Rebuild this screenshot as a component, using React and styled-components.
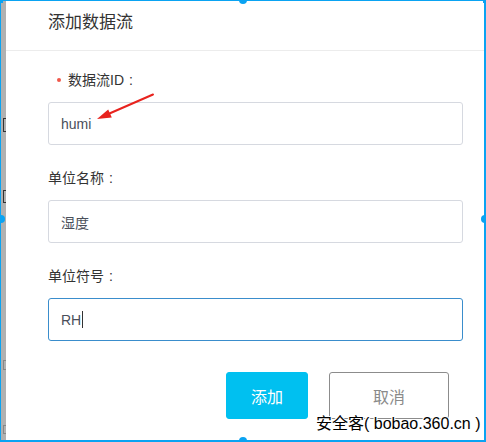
import React from "react";
import styled, { createGlobalStyle } from "styled-components";

const Global = createGlobalStyle`
  html, body { margin: 0; padding: 0; background: #fff; }
  body { font-family: "Liberation Sans", "Noto Sans CJK SC", sans-serif; }
`;

const BLUE = "#0aa3f2";

const Stage = styled.div`
  position: relative;
  width: 486px;
  height: 442px;
  overflow: hidden;
`;

const Frame = styled.div`
  box-sizing: border-box;
  width: 486px;
  height: 442px;
  border-top: 1px solid ${BLUE};
  border-left: 1px solid ${BLUE};
  border-right: 2px solid ${BLUE};
  border-bottom: 2px solid ${BLUE};
  display: flex;
`;

const BackStrip = styled.div`
  width: 5px;
  flex-shrink: 0;
  background: #b1b1b1;
  overflow: hidden;
  display: flex;
  flex-direction: column;
  align-items: flex-end;
`;

/* bits of the dimmed page behind the dialog */
const StripMark = styled.span`
  display: block;
  margin-top: ${(p) => p.top}px;
  width: ${(p) => p.w || 3}px;
  height: ${(p) => p.h}px;
  border-left: 1px solid ${(p) => p.color || "#333"};
  border-top: 1px solid ${(p) => p.color || "#333"};
  border-bottom: 1px solid ${(p) => p.color || "#333"};
  box-sizing: border-box;
`;

const Dialog = styled.div`
  flex: 1;
  background: #fff;
  display: flex;
  flex-direction: column;
`;

const Header = styled.div`
  box-sizing: border-box;
  height: 50px;
  padding: 12px 0 0 42px;
  border-bottom: 1px solid #ececec;
`;

const Title = styled.div`
  font-size: 17px;
  line-height: 20px;
  color: #333;
`;

const Body = styled.div`
  padding: 19px 21px 0 42px;
`;

const Field = styled.div`
  margin-bottom: 23px;
`;

const Label = styled.div`
  display: flex;
  align-items: center;
  font-size: 14px;
  line-height: 20px;
  color: #333;
  margin-bottom: 12px;
  padding-left: ${(p) => (p.required ? "9px" : "0")};
`;

const Colon = styled.span`
  margin-left: 5px;
`;

const Dot = styled.span`
  width: 4px;
  height: 4px;
  border-radius: 50%;
  background: #f0584a;
  margin-right: 7px;
`;

const Input = styled.div`
  box-sizing: border-box;
  height: 43px;
  border: 1px solid ${(p) => (p.focused ? "#3a8dcc" : "#d6d9e0")};
  border-radius: 3px;
  padding: 0 12px;
  display: flex;
  align-items: center;
  font-size: 14px;
  color: #4a4f5a;
`;

const Caret = styled.span`
  width: 1px;
  height: 17px;
  background: #333;
  margin-left: 1px;
`;

const Footer = styled.div`
  display: flex;
  justify-content: flex-end;
  gap: 21px;
  padding: 8px 14px 0 0;
`;

const Button = styled.button`
  box-sizing: border-box;
  height: 47px;
  width: ${(p) => p.w}px;
  border-radius: 3px;
  font-family: inherit;
  font-size: 16px;
  border: 1px solid ${(p) => (p.primary ? "#00c0f0" : "#8c8c8c")};
  background: ${(p) => (p.primary ? "#00c0f0" : "#fff")};
  color: ${(p) => (p.primary ? "#fff" : "#8a8a8a")};
  padding: 0;
`;

const Handle = styled.span`
  position: absolute;
  left: ${(p) => p.x - 4}px;
  top: ${(p) => p.y - 4}px;
  width: 8px;
  height: 8px;
  border-radius: 50%;
  background: ${BLUE};
`;

const Corner = styled.span`
  position: absolute;
  left: ${(p) => p.x}px;
  top: ${(p) => p.y}px;
  width: 3px;
  height: 3px;
  background: ${BLUE};
`;

const Watermark = styled.div`
  position: absolute;
  left: 316px;
  top: 415px;
  font-size: 16px;
  line-height: 18px;
  color: #000;
  white-space: nowrap;
  text-shadow: 1px 0 0 #fff, -1px 0 0 #fff, 0 1px 0 #fff, 0 -1px 0 #fff,
    1px 1px 0 #fff, -1px -1px 0 #fff;
`;

const Overlay = styled.svg`
  position: absolute;
  left: 0;
  top: 0;
  pointer-events: none;
`;

export default function App() {
  return (
    <>
      <Global />
      <Stage>
        <Frame>
          <BackStrip>
            <StripMark top={117} h={14} />
            <StripMark top={58} h={13} />
            <StripMark top={157} h={10} color="#888" />
            <StripMark top={55} h={9} color="#888" />
          </BackStrip>
          <Dialog>
            <Header>
              <Title>添加数据流</Title>
            </Header>
            <Body>
              <Field>
                <Label required>
                  <Dot />
                  数据流ID<Colon>:</Colon>
                </Label>
                <Input>humi</Input>
              </Field>
              <Field>
                <Label>
                  单位名称<Colon>:</Colon>
                </Label>
                <Input>湿度</Input>
              </Field>
              <Field>
                <Label>
                  单位符号<Colon>:</Colon>
                </Label>
                <Input focused>
                  RH
                  <Caret />
                </Input>
              </Field>
              <Footer>
                <Button primary w={82}>添加</Button>
                <Button w={120}>取消</Button>
              </Footer>
            </Body>
          </Dialog>
        </Frame>

        <Corner x={0} y={0} />
        <Corner x={483} y={0} />
        <Handle x={243} y={0} />
        <Handle x={1} y={219} />
        <Handle x={485} y={219} />
        <Handle x={243} y={441} />

        <Overlay width="486" height="442" viewBox="0 0 486 442">
          <line x1="153" y1="94.5" x2="106" y2="115" stroke="#e8231e" strokeWidth="2" strokeLinecap="round" />
          <polygon points="97,119 111.8,117.6 108.2,109.4" fill="#e8231e" />
        </Overlay>

        <Watermark>安全客( bobao.360.cn )</Watermark>
      </Stage>
    </>
  );
}
